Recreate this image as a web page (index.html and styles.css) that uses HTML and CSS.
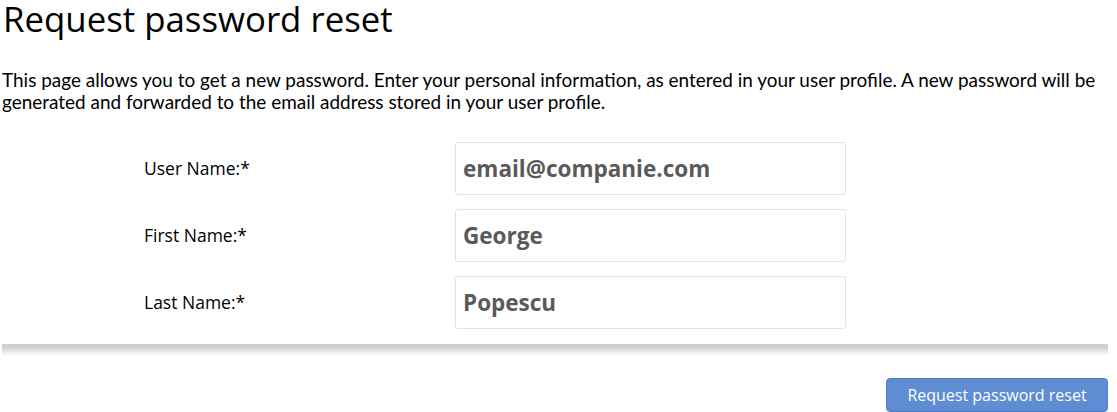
FILE: index.html
```html
<!DOCTYPE html>
<html lang="en">
<head>
<meta charset="utf-8">
<title>Request password reset</title>
<link rel="stylesheet" href="styles.css">
</head>
<body>
<div class="page">
  <h1 class="title">Request password reset</h1>
  <p class="intro">This page allows you to get a new password. Enter your personal information, as entered in your user profile. A new password will be generated and forwarded to the email address stored in your user profile.</p>
  <form class="form">
    <div class="row">
      <label class="label">User Name:*</label>
      <div class="field">email@companie.com</div>
    </div>
    <div class="row">
      <label class="label">First Name:*</label>
      <div class="field">George</div>
    </div>
    <div class="row">
      <label class="label">Last Name:*</label>
      <div class="field">Popescu</div>
    </div>
  </form>
  <div class="separator"></div>
  <div class="actions">
    <button class="btn" type="button">Request password reset</button>
  </div>
</div>
</body>
</html>
```

FILE: styles.css
```css
html, body {
  margin: 0;
  padding: 0;
  background: #ffffff;
}
.page {
  padding: 0 9px 0 2px;
  font-family: "Lato", "Open Sans", sans-serif;
  color: #000;
}
.title {
  margin: 0;
  padding: 0 0 0 1px;
  font-family: "Open Sans", sans-serif;
  font-weight: 400;
  font-size: 34.8px;
  line-height: 37px;
  letter-spacing: 0;
}
.intro {
  margin: 32px 0 0 0;
  font-family: "Lato", sans-serif;
  font-size: 18.95px;
  line-height: 22px;
}
.form {
  display: flex;
  flex-direction: column;
  gap: 14px;
  margin-top: 29px;
  padding-left: 142px;
}
.row {
  display: grid;
  grid-template-columns: 311px 391px;
  align-items: center;
}
.label {
  font-family: "Open Sans", sans-serif;
  font-size: 17.5px;
  color: #000;
  padding-bottom: 2px;
}
.field {
  box-sizing: border-box;
  height: 53px;
  border: 1px solid #e3e3e3;
  border-radius: 3px;
  padding: 0 7px;
  display: flex;
  align-items: center;
  font-family: "Open Sans", sans-serif;
  font-weight: 700;
  font-size: 22.5px;
  color: #5a5a5a;
}
.separator {
  margin-top: 15px;
  height: 11px;
  background: linear-gradient(to bottom, #c9c9c9 0%, #d8d8d8 35%, #f4f4f4 80%, #ffffff 100%);
  border-top: 1px solid #d0d0d0;
}
.actions {
  display: flex;
  justify-content: flex-end;
  margin-top: 22px;
}
.btn {
  width: 222px;
  height: 34px;
  background: #5f8dd3;
  border: 1px solid #4f7fcb;
  border-radius: 4px;
  color: #ffffff;
  font-family: "Open Sans", sans-serif;
  font-size: 16px;
  padding: 0;
}
```
